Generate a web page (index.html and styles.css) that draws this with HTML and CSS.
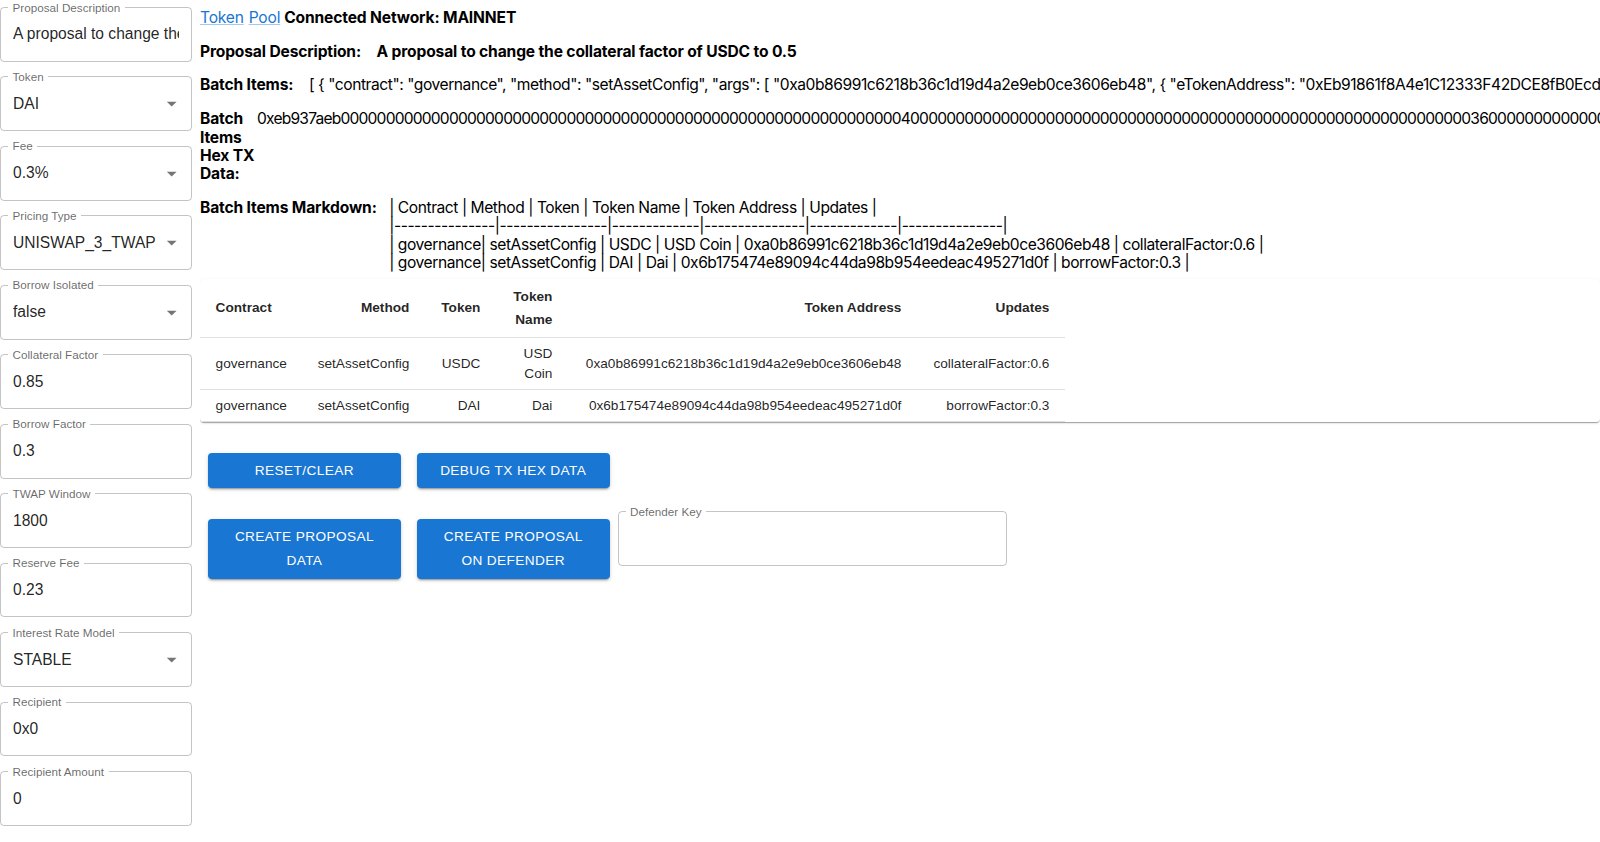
FILE: index.html
```html
<!DOCTYPE html>
<html>
<head>
  <title>Euler Proposal Builder</title>
  <link rel="stylesheet" href="styles.css">
</head>
<body>
  <div class="page">
    <div class="form-col">
      <div class="field">
        <span class="field-label">Proposal Description</span>
        <span class="field-value">A proposal to change the collateral factor of USDC to 0.5</span>
      </div>
      <div class="field select">
        <span class="field-label">Token</span>
        <span class="field-value">DAI</span>
        <svg class="arrow" viewBox="0 0 24 24"><path d="M7 10l5 5 5-5z"/></svg>
      </div>
      <div class="field select">
        <span class="field-label">Fee</span>
        <span class="field-value">0.3%</span>
        <svg class="arrow" viewBox="0 0 24 24"><path d="M7 10l5 5 5-5z"/></svg>
      </div>
      <div class="field select">
        <span class="field-label">Pricing Type</span>
        <span class="field-value">UNISWAP_3_TWAP</span>
        <svg class="arrow" viewBox="0 0 24 24"><path d="M7 10l5 5 5-5z"/></svg>
      </div>
      <div class="field select">
        <span class="field-label">Borrow Isolated</span>
        <span class="field-value">false</span>
        <svg class="arrow" viewBox="0 0 24 24"><path d="M7 10l5 5 5-5z"/></svg>
      </div>
      <div class="field">
        <span class="field-label">Collateral Factor</span>
        <span class="field-value">0.85</span>
      </div>
      <div class="field">
        <span class="field-label">Borrow Factor</span>
        <span class="field-value">0.3</span>
      </div>
      <div class="field">
        <span class="field-label">TWAP Window</span>
        <span class="field-value">1800</span>
      </div>
      <div class="field">
        <span class="field-label">Reserve Fee</span>
        <span class="field-value">0.23</span>
      </div>
      <div class="field select">
        <span class="field-label">Interest Rate Model</span>
        <span class="field-value">STABLE</span>
        <svg class="arrow" viewBox="0 0 24 24"><path d="M7 10l5 5 5-5z"/></svg>
      </div>
      <div class="field">
        <span class="field-label">Recipient</span>
        <span class="field-value">0x0</span>
      </div>
      <div class="field">
        <span class="field-label">Recipient Amount</span>
        <span class="field-value">0</span>
      </div>
    </div>

    <div class="output">
      <div class="net-row">
        <a href="#" class="nav-link">Token</a> <a href="#">Pool</a> <b>Connected Network: MAINNET</b>
      </div>

      <div class="info-row">
        <b class="info-label">Proposal Description:</b>
        <b class="info-value">A proposal to change the collateral factor of USDC to 0.5</b>
      </div>

      <div class="info-row">
        <b class="info-label">Batch Items:</b>
        <span class="info-value">[ { "contract": "governance", "method": "setAssetConfig", "args": [ "0xa0b86991c6218b36c1d19d4a2e9eb0ce3606eb48", { "eTokenAddress": "0xEb91861f8A4e1C12333F42DCE8fB0Ecdc28dA716", "borrowIsolated": false, "collateralFactor": 0.6, "borrowFactor": 4294967295, "twapWindow": 1800 } ] } ]</span>
      </div>

      <div class="info-row hex-row">
        <b class="info-label">Batch Items Hex TX Data:</b>
        <span class="info-value">0xeb937aeb00000000000000000000000000000000000000000000000000000000000000400000000000000000000000000000000000000000000000000000000000000360000000000000000000000000000000000000000000000000000000000000002</span>
      </div>

      <div class="info-row md-row">
        <b class="info-label">Batch Items Markdown:</b>
        <div class="info-value">
          <div>| Contract | Method | Token | Token Name | Token Address | Updates |</div>
          <div>|---------------|----------------|-------------|---------------|-------------|---------------|</div>
          <div>| governance| setAssetConfig | USDC | USD Coin | 0xa0b86991c6218b36c1d19d4a2e9eb0ce3606eb48 | collateralFactor:0.6 |</div>
          <div>| governance| setAssetConfig | DAI | Dai | 0x6b175474e89094c44da98b954eedeac495271d0f | borrowFactor:0.3 |</div>
        </div>
      </div>

      <div class="table-paper">
        <table class="items">
          <colgroup>
            <col style="width: 102px">
            <col style="width: 123px">
            <col style="width: 71px">
            <col style="width: 72px">
            <col style="width: 349px">
            <col style="width: 148px">
          </colgroup>
          <thead>
            <tr>
              <th class="left">Contract</th>
              <th>Method</th>
              <th>Token</th>
              <th>Token Name</th>
              <th>Token Address</th>
              <th>Updates</th>
            </tr>
          </thead>
          <tbody>
            <tr>
              <td class="left">governance</td>
              <td>setAssetConfig</td>
              <td>USDC</td>
              <td>USD Coin</td>
              <td>0xa0b86991c6218b36c1d19d4a2e9eb0ce3606eb48</td>
              <td>collateralFactor:0.6</td>
            </tr>
            <tr>
              <td class="left">governance</td>
              <td>setAssetConfig</td>
              <td>DAI</td>
              <td>Dai</td>
              <td>0x6b175474e89094c44da98b954eedeac495271d0f</td>
              <td>borrowFactor:0.3</td>
            </tr>
          </tbody>
        </table>
      </div>

      <div class="actions">
        <div class="btn-row">
          <button class="btn">Reset/Clear</button>
          <button class="btn">Debug TX Hex Data</button>
        </div>
        <div class="btn-row second">
          <button class="btn">Create Proposal Data</button>
          <button class="btn">Create Proposal on Defender</button>
          <div class="field defender">
            <span class="field-label">Defender Key</span>
            <span class="field-value"></span>
          </div>
        </div>
      </div>
    </div>
  </div>
</body>
</html>
```

FILE: styles.css
```css
html,
body {
  margin: 0;
  overflow: hidden;
  background-color: #ffffff;
}

body {
  font-family: Inter, "Liberation Sans", sans-serif;
  color: #000000;
}

.page {
  display: flex;
  gap: 8px;
}

/* left column: outlined inputs */
.form-col {
  width: 192px;
  flex-shrink: 0;
  padding-top: 7px;
}

.field {
  position: relative;
  box-sizing: border-box;
  height: 54.6px;
  margin-bottom: 14.9px;
  padding: 0 12px;
  display: flex;
  align-items: center;
  border: 1px solid rgba(0, 0, 0, 0.23);
  border-radius: 4px;
  font-family: "Liberation Sans", Arial, sans-serif;
}

.field-label {
  position: absolute;
  top: -7.5px;
  left: 7px;
  padding: 0 4.5px;
  font-size: 11.7px;
  line-height: 13px;
  color: rgba(0, 0, 0, 0.6);
  background-color: #ffffff;
  white-space: nowrap;
}

.field-value {
  flex: 1;
  min-width: 0;
  overflow: hidden;
  white-space: nowrap;
  font-size: 15.6px;
  color: rgba(0, 0, 0, 0.87);
}

.field.select {
  padding-right: 8px;
}

.arrow {
  width: 23.4px;
  height: 23.4px;
  flex-shrink: 0;
  fill: rgba(0, 0, 0, 0.54);
}

/* right column: generated output */
.output {
  flex: 1;
  min-width: 0;
  overflow: hidden;
  font-size: 15.6px;
  line-height: 18.4px;
  letter-spacing: -0.45px;
}

.output b {
  letter-spacing: -0.15px;
}

.net-row {
  padding-top: 9px;
  white-space: nowrap;
}

.net-row a {
  color: #1976d2;
  letter-spacing: -0.2px;
  text-decoration-color: rgba(25, 118, 210, 0.4);
}

.nav-link {
  margin-right: 1px;
}

.info-row {
  display: flex;
  gap: 15.6px;
  margin-top: 15.3px;
  white-space: nowrap;
}

.info-label {
  flex-shrink: 0;
}

.hex-row {
  gap: 0;
}

.hex-row .info-label {
  width: 57px;
  white-space: normal;
}

.hex-row .info-value {
  letter-spacing: -0.8px;
}

.md-row {
  gap: 12.5px;
}

.table-paper {
  margin-top: 6px;
  background-color: #ffffff;
  border-radius: 4px;
  letter-spacing: normal;
  box-shadow: 0 2px 1px -1px rgba(0, 0, 0, 0.2), 0 1px 1px 0 rgba(0, 0, 0, 0.14), 0 1px 3px 0 rgba(0, 0, 0, 0.12);
}

.items {
  width: 865px;
  table-layout: fixed;
  border-collapse: collapse;
  font-family: "Liberation Sans", Arial, sans-serif;
  font-size: 13.65px;
  color: rgba(0, 0, 0, 0.87);
}

.items th,
.items td {
  padding: 5.85px 15.6px;
  text-align: right;
  border-bottom: 1px solid #e0e0e0;
}

.items th {
  font-weight: bold;
  line-height: 23.4px;
}

.items td {
  line-height: 19.5px;
}

.items .left {
  text-align: left;
}

.actions {
  margin-top: 23px;
  letter-spacing: normal;
}

.btn-row {
  display: flex;
  align-items: flex-start;
}

.btn-row.second {
  margin-top: 15px;
}

.btn {
  width: 193.2px;
  margin: 7.8px;
  padding: 5.85px 15.6px;
  font-family: "Liberation Sans", Arial, sans-serif;
  font-size: 13.65px;
  line-height: 23.9px;
  letter-spacing: 0.39px;
  text-transform: uppercase;
  color: #ffffff;
  background-color: #1976d2;
  border: none;
  border-radius: 4px;
  cursor: pointer;
  box-shadow: 0 3px 1px -2px rgba(0, 0, 0, 0.2), 0 2px 2px 0 rgba(0, 0, 0, 0.14), 0 1px 5px 0 rgba(0, 0, 0, 0.12);
}

.btn:hover {
  background-color: #1565c0;
}

.field.defender {
  width: 389px;
  margin: 0;
}
```
